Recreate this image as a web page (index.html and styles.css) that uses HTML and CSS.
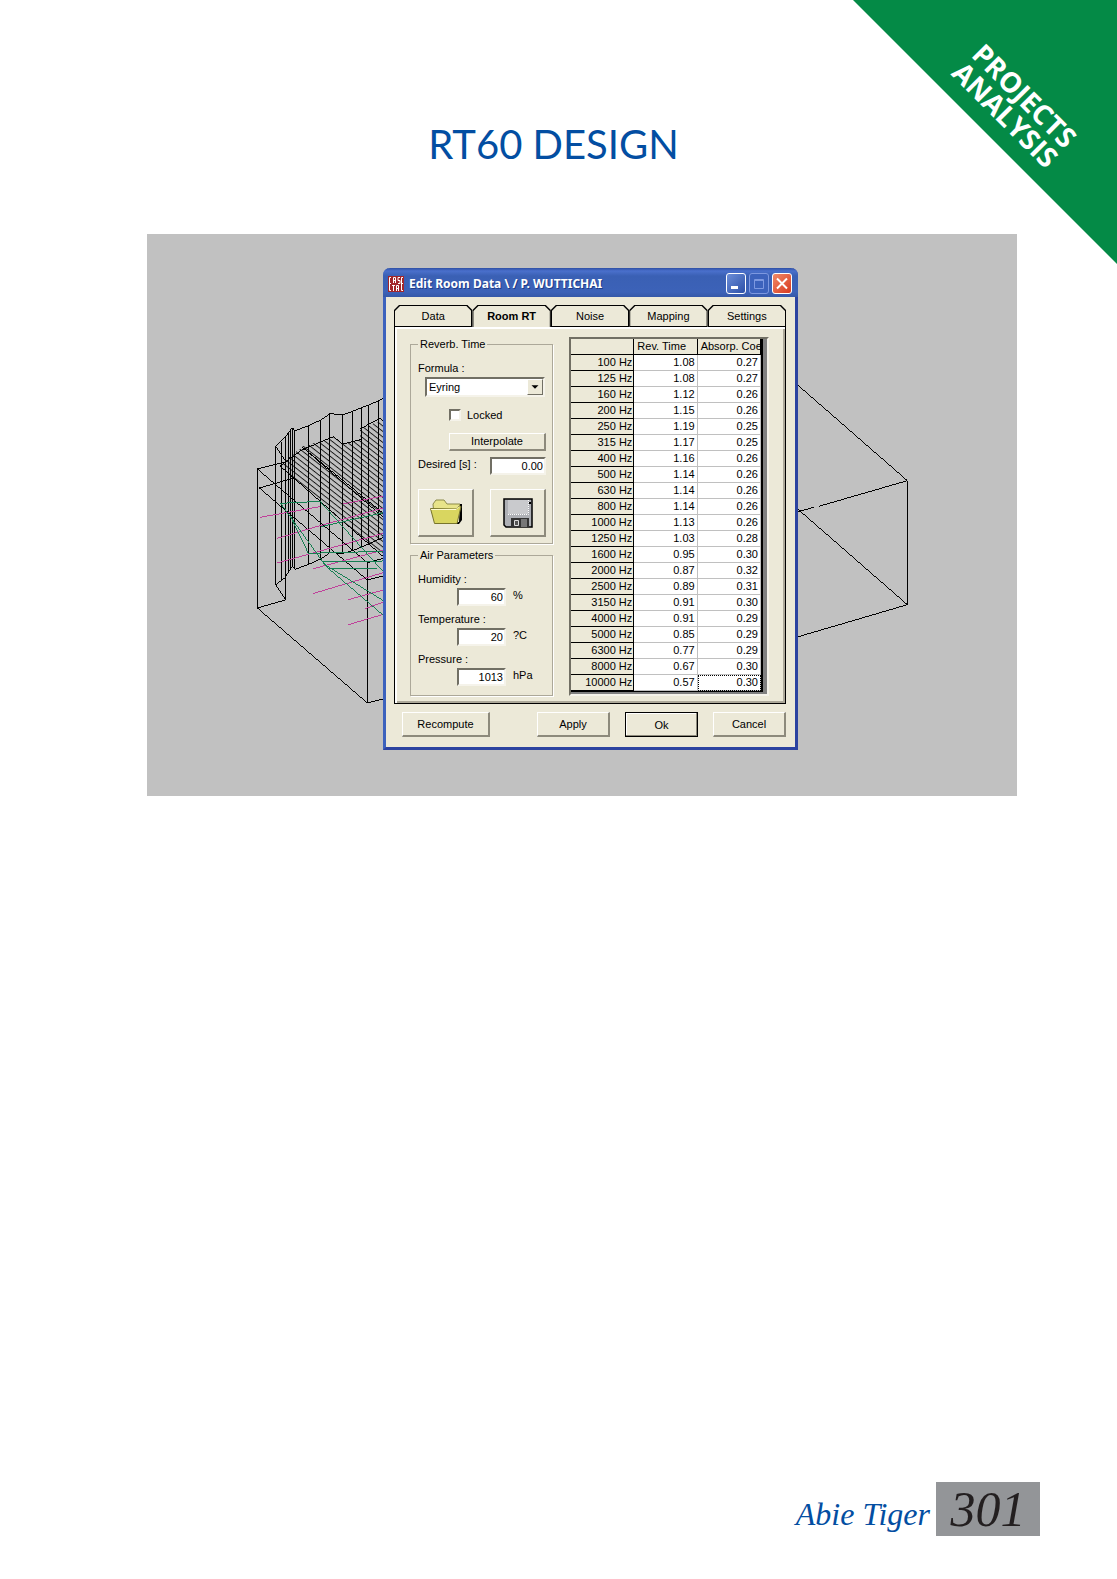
FILE: index.html
```html
<!DOCTYPE html>
<html lang="en">
<head>
<meta charset="utf-8">
<title>RT60 Design</title>
<link rel="stylesheet" href="styles.css">
</head>
<body>
<div class="page">
  <div class="corner"><p class="corner-text">PROJECTS<br>ANALYSIS</p></div>
  <h1 class="page-title">RT60 DESIGN</h1>
  <main class="scene">
    <svg class="wireframe" width="870" height="562" viewBox="0 0 870 562" aria-hidden="true">
      <defs>
        <pattern id="hatch" width="40" height="13" patternUnits="userSpaceOnUse" patternTransform="translate(120 258) rotate(38)">
          <path d="M0 1.500H40" stroke="#000" stroke-width="2.600"/>
        </pattern>
      </defs>
      <g transform="translate(93 146) scale(.33333)" fill="none" stroke="#000" stroke-width="3" shape-rendering="crispEdges">
        <path fill="url(#hatch)" stroke="none" d="M120 258 185 200 280 172 308 192 360 178 360 147 430 118V530L380 490Z"/>
        <path d="M135 246 52 267V684L136 660V172M52 684 382 969 430 957M58 324 165 293M58 324 382 600 430 588M52 267 382 548 430 535M382 548V969M107 198V615L136 658M107 198 135 240"/>
        <path d="M107 198 135 172 157 143 165 152 206 137 242 120 270 101 308 104 338 94 365 83 386 75 416 62 430 54M107 615 135 593 157 558 165 568 206 553 242 537 270 518 308 520 338 512 386 492 430 472"/>
        <path d="M124 185V600M145 160V580M151 152V570M157 143V560M165 152V568M206 137V553M242 120V537M270 101V518M308 104V520M338 94V512M365 83V500M386 75V492M416 62V478"/>
        <path d="M120 258 185 210 280 170 308 192 365 178M360 147 420 115 430 125M185 200 430 400M190 204 430 412M120 258 430 530"/>
        <path stroke="#c0409a" stroke-width="3" d="M60 412 240 380M310 372 430 348M112 475 230 440 430 384M112 549 430 460M220 566 430 510M218 641 430 578M325 659 430 630M375 686 430 666M325 734 430 703"/>
        <path stroke="#168052" stroke-width="3" d="M122 370 240 364 430 575M122 370 248 545M152 410 205 520 430 514M242 440 430 398M248 545 430 543M248 545 265 565H410M248 550 430 662M265 565 430 706"/>
      </g>
      <g transform="translate(633 136) scale(.33333)" fill="none" stroke="#000" stroke-width="3" shape-rendering="crispEdges">
        <path d="M52 44 382 332V704L52 801M382 332 116 409M102 412 52 425M52 416 382 704"/>
      </g>
    </svg>

    <section class="dialog" aria-label="Edit Room Data">
      <header class="titlebar">
        <svg class="app-icon" width="16" height="16" viewBox="0 0 16 16" aria-hidden="true">
          <path fill="#a3262a" d="M0 0h16v16H0z"/>
          <path fill="none" stroke="#fff" d="M3 1.500H1.500v13H3M1 7.500h2M5.500 7V1.500h2V7M5 4.500h3M12 1.500h-2v3h2v3h-2M15 1.500h-1.500v13H15M13 7.500h2M5.500 9v6M4 9.500h3M8.500 15V9.500h2V15M8 12.500h3"/>
        </svg>
        <h2 class="titlebar-text">Edit Room Data \ / P. WUTTICHAI</h2>
        <div class="window-buttons">
          <button class="win-btn" type="button" aria-label="Minimize"><svg width="18" height="19" viewBox="0 0 18 19"><path fill="#fff" d="M4 12h7v3H4z"/></svg></button>
          <button class="win-btn win-btn-off" type="button" aria-label="Maximize" disabled><svg width="18" height="19" viewBox="0 0 18 19"><path fill="none" stroke="#7d98e0" d="M4.500 5.500h9v9h-9zM4 6.500h10"/></svg></button>
          <button class="win-btn win-btn-close" type="button" aria-label="Close"><svg width="18" height="19" viewBox="0 0 18 19"><path stroke="#fff" stroke-width="2" d="M4 4.500l10 10M14 4.500l-10 10"/></svg></button>
        </div>
      </header>

      <div class="dialog-body">
        <nav class="tabs">
          <button class="tab" type="button">Data</button>
          <button class="tab tab-active" type="button">Room RT</button>
          <button class="tab" type="button">Noise</button>
          <button class="tab" type="button">Mapping</button>
          <button class="tab" type="button">Settings</button>
        </nav>

        <div class="panel">
          <div class="groups">
            <fieldset class="group">
              <legend>Reverb. Time</legend>
              <div class="group-body">
                <label for="formula">Formula :</label>
                <div class="select-wrap">
                  <select id="formula" class="field select"><option>Eyring</option></select>
                  <svg class="select-arrow" width="16" height="16" viewBox="0 0 16 16" aria-hidden="true"><path d="M4 6h8l-4 4z"/></svg>
                </div>
                <label class="check"><input type="checkbox" class="check-box">Locked</label>
                <button class="btn btn-interpolate" type="button">Interpolate</button>
                <div class="desired">
                  <label for="desired">Desired [s] :</label>
                  <input id="desired" class="field desired-field" value="0.00">
                </div>
                <div class="icon-row">
                  <button class="btn icon-btn" type="button" aria-label="Open">
                    <svg width="34" height="30" viewBox="0 0 34 30"><path fill="#e8e489" stroke="#8c8a4a" d="M4.500 12 4 6l3-4h8l3 4h13v7"/><path d="M31 6h2v16l-3 4H6l24-2z"/><path fill="#d9d660" stroke="#77742c" d="M1.500 10.500 27 11l3-3 2 .5-4 17H5.500z"/><path stroke="#fffbd0" fill="none" d="M2 11.500h25l3-3"/></svg>
                  </button>
                  <button class="btn icon-btn" type="button" aria-label="Save">
                    <svg width="30" height="30" viewBox="0 0 30 30"><path fill="#aeb0b5" stroke="#000" stroke-width="1.500" d="M1 1h28v28H3l-2-2z"/><path fill="#c9cacd" d="M5 2h20v14H5z"/><path fill="none" stroke="#fff" stroke-dasharray="1 1" d="M5 16.500h20.500V2"/><path fill="#333" d="M8 20h18v9H8z"/><path fill="#777" d="M18 21h6v8h-6z"/><path fill="#555" stroke="#ddd" d="M11.500 22.500h4v5h-4z"/><path d="M26 4h2v2h-2z"/></svg>
                  </button>
                </div>
              </div>
            </fieldset>

            <fieldset class="group">
              <legend>Air Parameters</legend>
              <div class="group-body">
                <label for="humidity">Humidity :</label>
                <div class="measure"><input id="humidity" class="field measure-field" value="60"><span>%</span></div>
                <label class="next-label" for="temperature">Temperature :</label>
                <div class="measure"><input id="temperature" class="field measure-field" value="20"><span>?C</span></div>
                <label class="next-label" for="pressure">Pressure :</label>
                <div class="measure"><input id="pressure" class="field measure-field" value="1013"><span>hPa</span></div>
              </div>
            </fieldset>
          </div>

          <div class="grid-frame">
            <table class="data">
              <thead><tr><th></th><th scope="col">Rev. Time</th><th scope="col">Absorp. Coe</th></tr></thead>
              <tbody>
                <tr><th scope="row">100 Hz</th><td>1.08</td><td>0.27</td></tr>
                <tr><th scope="row">125 Hz</th><td>1.08</td><td>0.27</td></tr>
                <tr><th scope="row">160 Hz</th><td>1.12</td><td>0.26</td></tr>
                <tr><th scope="row">200 Hz</th><td>1.15</td><td>0.26</td></tr>
                <tr><th scope="row">250 Hz</th><td>1.19</td><td>0.25</td></tr>
                <tr><th scope="row">315 Hz</th><td>1.17</td><td>0.25</td></tr>
                <tr><th scope="row">400 Hz</th><td>1.16</td><td>0.26</td></tr>
                <tr><th scope="row">500 Hz</th><td>1.14</td><td>0.26</td></tr>
                <tr><th scope="row">630 Hz</th><td>1.14</td><td>0.26</td></tr>
                <tr><th scope="row">800 Hz</th><td>1.14</td><td>0.26</td></tr>
                <tr><th scope="row">1000 Hz</th><td>1.13</td><td>0.26</td></tr>
                <tr><th scope="row">1250 Hz</th><td>1.03</td><td>0.28</td></tr>
                <tr><th scope="row">1600 Hz</th><td>0.95</td><td>0.30</td></tr>
                <tr><th scope="row">2000 Hz</th><td>0.87</td><td>0.32</td></tr>
                <tr><th scope="row">2500 Hz</th><td>0.89</td><td>0.31</td></tr>
                <tr><th scope="row">3150 Hz</th><td>0.91</td><td>0.30</td></tr>
                <tr><th scope="row">4000 Hz</th><td>0.91</td><td>0.29</td></tr>
                <tr><th scope="row">5000 Hz</th><td>0.85</td><td>0.29</td></tr>
                <tr><th scope="row">6300 Hz</th><td>0.77</td><td>0.29</td></tr>
                <tr><th scope="row">8000 Hz</th><td>0.67</td><td>0.30</td></tr>
                <tr><th scope="row">10000 Hz</th><td>0.57</td><td class="cell-focus">0.30</td></tr>
              </tbody>
            </table>
          </div>
        </div>

        <footer class="actions">
          <button class="btn action recompute" type="button">Recompute</button>
          <button class="btn action" type="button">Apply</button>
          <button class="btn action action-default" type="button">Ok</button>
          <button class="btn action" type="button">Cancel</button>
        </footer>
      </div>
    </section>
  </main>

  <footer class="page-footer">
    <span class="author">Abie Tiger</span>
    <span class="page-number">301</span>
  </footer>
</div>
</body>
</html>
```
FILE: styles.css
```css
* { box-sizing: border-box; }

body {
  margin: 0;
  background: #fff;
  color: #000;
  font: 11px/14px "Liberation Sans", Arial, sans-serif;
}

button, input, select { font: inherit; color: inherit; margin: 0; }

.page {
  position: relative;
  display: flex;
  flex-direction: column;
  min-height: 100vh;
  overflow: hidden;
}

/* Corner ribbon */
.corner {
  position: absolute;
  top: 0;
  right: 0;
  width: 264px;
  height: 264px;
  background: #048a46;
  clip-path: polygon(0 0, 100% 0, 100% 100%);
}

.corner-text {
  position: absolute;
  top: 78px;
  left: 82px;
  width: 160px;
  margin: 0;
  transform: rotate(45deg);
  color: #fff;
  text-align: center;
  font: bold 28px/27px "Open Sans", "Noto Sans", sans-serif;
}

.page-title {
  margin: 114px 0 60px;
  padding-right: 10px;
  text-align: center;
  color: #034ea2;
  font: 400 40px/60px Lato, "Open Sans", sans-serif;
}

/* Room view */
.scene {
  position: relative;
  display: flex;
  margin: 0 100px 0 147px;
  padding: 34px 0 46px 236px;
  background: #c1c1c1;
}

.wireframe { position: absolute; top: 0; left: 0; }

/* Dialog window */
.dialog {
  position: relative;
  width: 415px;
  border: solid #2c43a0;
  border-width: 0 3px 3px;
  border-radius: 7px 7px 0 0;
  border-left-color: #3c62bd;
  background: #ece9d8;
}

.titlebar {
  display: flex;
  align-items: center;
  height: 29px;
  margin: 0 -3px;
  padding: 2px 6px 0 5px;
  border-radius: 7px 7px 0 0;
  background: linear-gradient(#2f4fa4 0, #4a70cc 3px, #3a60b4 8px, #3c62b8 24px, #3558a8);
}

.titlebar-text {
  flex: 1;
  margin: 0 0 0 5px;
  color: #fff;
  font: bold 12px/16px "Noto Sans", "Open Sans", sans-serif;
  white-space: nowrap;
  text-shadow: 1px 1px 0 #1e3c88;
}

.window-buttons { display: flex; gap: 3px; }

.win-btn {
  width: 20px;
  height: 21px;
  padding: 0;
  border: 1px solid #fff;
  border-radius: 3px;
  background: linear-gradient(135deg, #6c8ed8, #2c50a8);
}

.win-btn svg { display: block; }
.win-btn-off { border-color: #7d98e0; background: #3c62bc; }
.win-btn-close { background: linear-gradient(135deg, #f08a68, #d83a20); }

.dialog-body { padding: 8px 9px 10px 8px; }

/* Tabs */
.tabs { display: flex; height: 22px; }

.tab {
  position: relative;
  z-index: 1;
  flex: 1;
  height: 22px;
  padding: 0;
  border: 0;
  background: #000;
  clip-path: polygon(0 5px, 5px 0, calc(100% - 5px) 0, 100% 5px, 100% 100%, 0 100%);
}

.tab::before {
  content: "";
  position: absolute;
  inset: 1px;
  z-index: -1;
  background: #ece9d8;
  clip-path: polygon(0 5px, 5px 0, calc(100% - 5px) 0, 100% 5px, 100% 100%, 0 100%);
}

.tab-active { font-weight: bold; }
.tab-active::before { bottom: 0; }

.panel {
  display: flex;
  gap: 16px;
  padding: 10px 16px 7px 15px;
  border: solid #000;
  border-width: 0 1px 1px;
  box-shadow: inset 2px 2px 0 #fff, inset -2px -2px 0 #aca899;
}

.groups { display: flex; flex-direction: column; gap: 4px; flex: 0 0 143px; }

.group {
  min-width: 0;
  margin: 0;
  padding: 10px 6px 6px 7px;
  border: 1px solid #aca899;
  box-shadow: 1px 1px 0 #fff;
}

.group:last-child { padding-bottom: 9px; }
.group legend { padding: 0 2px; }
.group-body { display: flex; flex-direction: column; align-items: flex-start; }

.field {
  height: 18px;
  padding: 0 1px;
  border: 2px solid;
  border-color: #716f64 #f5f3ea #f5f3ea #716f64;
  border-radius: 0;
  outline: 0;
  background: #fff;
}

input.field { text-align: right; }

.select-wrap { position: relative; width: 120px; margin: 2px 0 0 7px; }
.select { display: block; width: 120px; height: 20px; padding: 0 2px; appearance: none; }

.select-arrow {
  position: absolute;
  top: 2px;
  right: 2px;
  border: 1px solid;
  border-color: #fff #716f64 #716f64 #fff;
  background: #ece9d8;
  pointer-events: none;
}

.check { display: flex; align-items: center; gap: 6px; margin: 11px 0 11px 31px; }

.check-box {
  width: 12px;
  height: 12px;
  border: 2px solid;
  border-color: #716f64 #f5f3ea #f5f3ea #716f64;
  background: #fff;
  appearance: none;
}

.btn {
  padding: 0;
  border: solid;
  border-width: 1px 2px 2px 1px;
  border-color: #fff #8d8a7c #8d8a7c #fff;
  background: #ece9d8;
}

.btn-interpolate { width: 97px; height: 18px; margin-left: 31px; line-height: 15px; }

.desired { display: flex; justify-content: space-between; width: 100%; margin-top: 6px; }
.desired-field { width: 56px; }

.icon-row { display: flex; justify-content: space-between; width: 100%; margin-top: 14px; }
.icon-btn { display: flex; align-items: center; justify-content: center; width: 56px; height: 48px; }

.measure { display: flex; gap: 7px; margin: 2px 0 0 39px; }
.measure-field { width: 49px; }
.next-label { margin-top: 6px; }

/* Frequency table */
.grid-frame {
  flex: 1;
  border: 2px solid;
  border-color: #716f64 #f5f3ea #f5f3ea #716f64;
  background: #808080;
}

.data {
  width: 192px;
  table-layout: fixed;
  border-collapse: separate;
  border-spacing: 0;
  border-right: 2px solid #000;
  border-bottom: 1px solid #000;
  line-height: 15px;
}

.data th, .data td {
  height: 16px;
  padding: 0 2px 0 0;
  border: solid #c0c0c0;
  border-width: 0 1px 1px 0;
  background: #fff;
  text-align: right;
  font-weight: normal;
  white-space: nowrap;
}

.data th { border-color: #000; background: #ece9d8; }
.data tbody th { padding-right: 1px; }
.data thead th { padding: 0 0 0 3px; text-align: left; }
.data .cell-focus { outline: 1px dotted #000; outline-offset: -1px; }

.actions { display: flex; gap: 15px; padding: 8px 0 0 8px; }
.action { width: 73px; height: 25px; }
.recompute { width: 88px; margin-right: auto; }
.action-default { border: 1px solid #000; box-shadow: inset -1px -1px 0 #8d8a7c, inset 1px 1px 0 #fff; }

/* Page footer */
.page-footer {
  display: flex;
  align-items: stretch;
  justify-content: flex-end;
  gap: 6px;
  margin-top: auto;
  padding: 0 77px 43px 0;
}

.author {
  align-self: flex-end;
  color: #034ea2;
  font: italic 32px/44px Z003, "Liberation Serif", cursive;
}

.page-number {
  width: 104px;
  background: #939598;
  color: #231f20;
  text-align: center;
  font: italic 50px/54px Z003, "Liberation Serif", cursive;
}
```
